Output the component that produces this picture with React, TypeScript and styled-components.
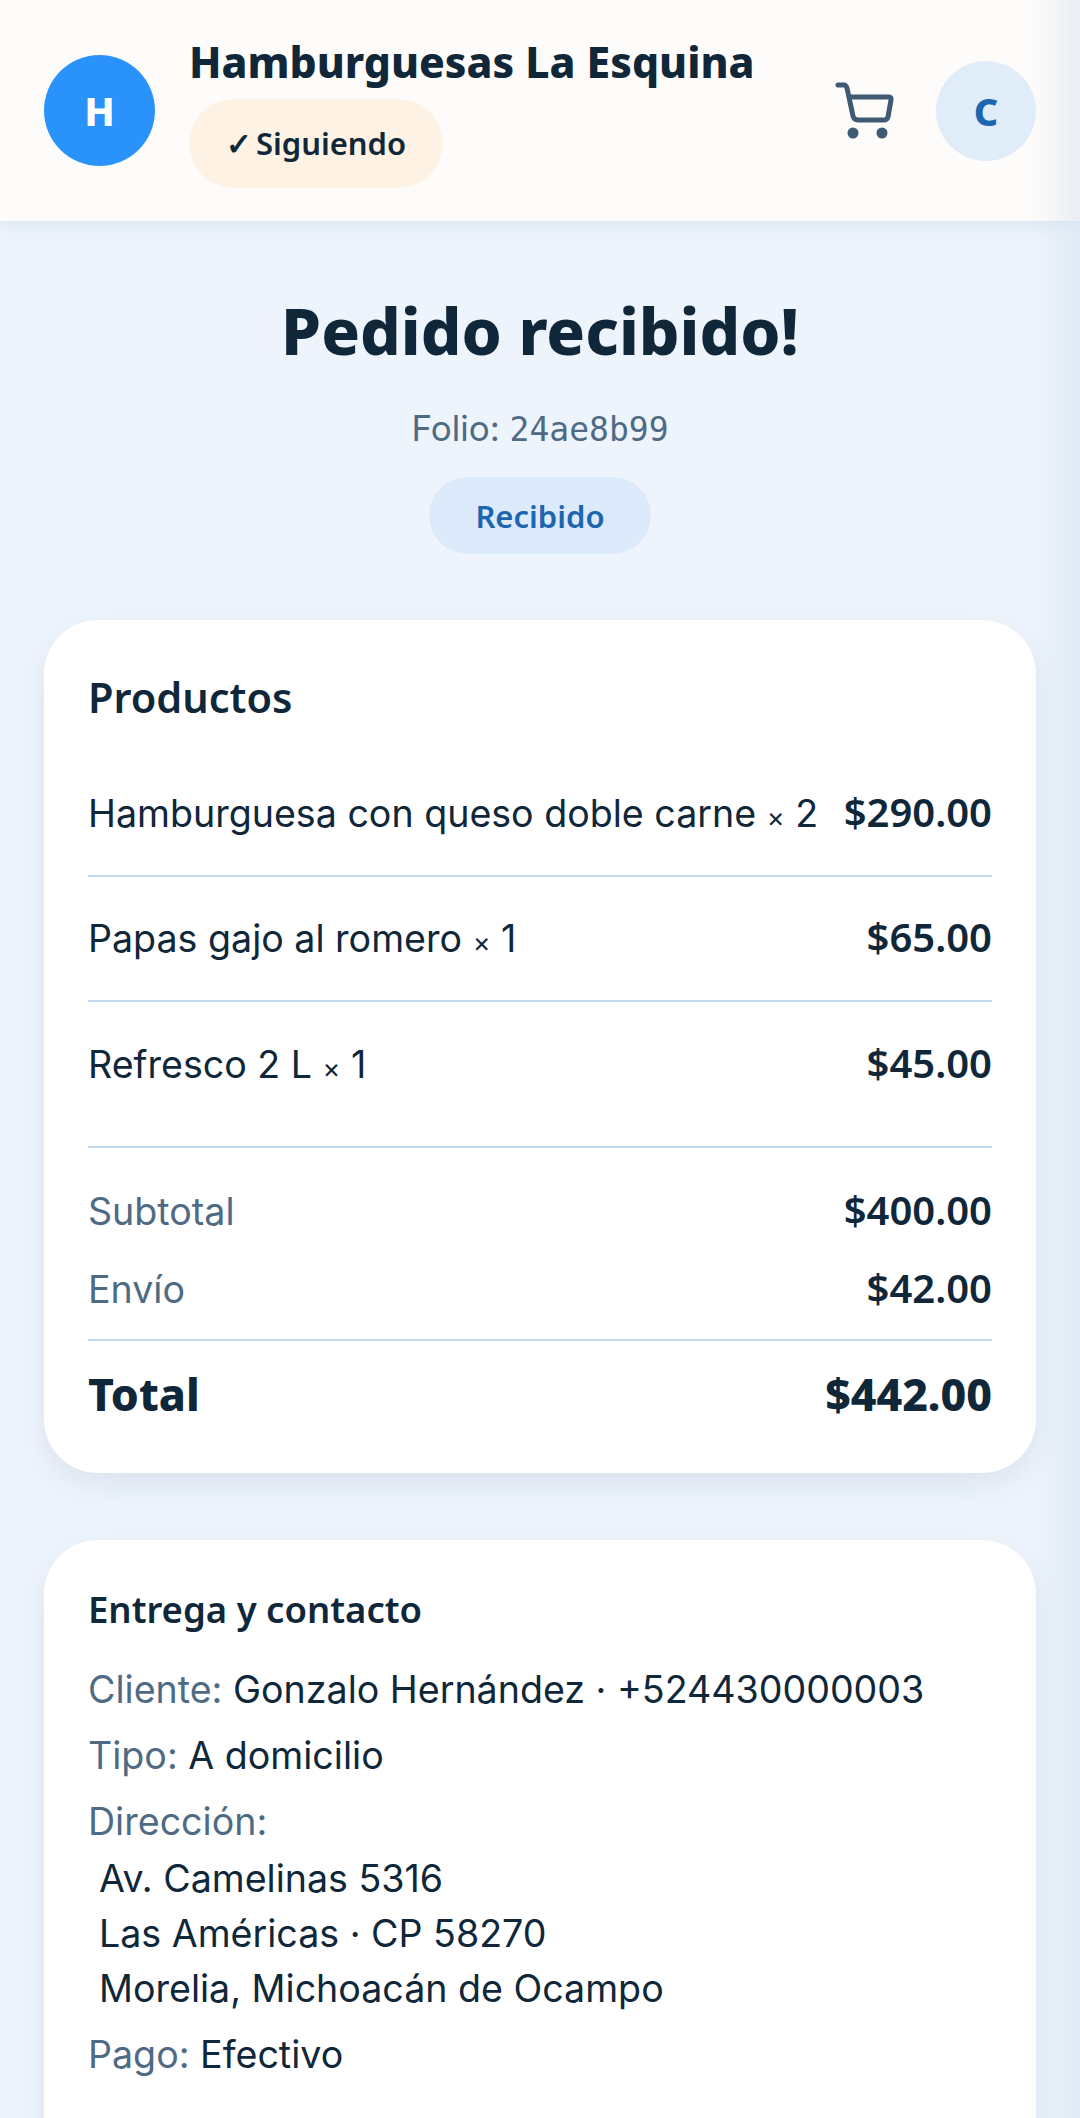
import React from "react";
import styled, { createGlobalStyle } from "styled-components";

const GlobalStyle = createGlobalStyle`
  html, body {
    margin: 0;
    padding: 0;
    background: #edf4fc;
  }
  * {
    box-sizing: border-box;
  }
`;

const products = [
  { name: "Hamburguesa con queso doble carne", qty: 2, price: "$290.00" },
  { name: "Papas gajo al romero", qty: 1, price: "$65.00" },
  { name: "Refresco 2 L", qty: 1, price: "$45.00" },
];

const CartIcon = () => (
  <svg width="62" height="62" viewBox="0 0 62 62" fill="none" stroke="#3f5a73" strokeWidth="5" strokeLinecap="round" strokeLinejoin="round">
    <path d="M4 5H10Q12 5 13 8L19 36Q20 40 24 40H50Q53 40 54 37L57 20Q57.5 17 55 17H15" />
    <circle cx="19" cy="53" r="5.5" fill="#3f5a73" stroke="none" />
    <circle cx="48" cy="53" r="5.5" fill="#3f5a73" stroke="none" />
  </svg>
);

const App: React.FC = () => {
  return (
    <Page>
      <GlobalStyle />
      <Header>
        <Avatar>H</Avatar>
        <Brand>
          <BrandName>Hamburguesas La Esquina</BrandName>
          <FollowPill>✓ Siguiendo</FollowPill>
        </Brand>
        <HeaderActions>
          <CartIcon />
          <UserBubble>C</UserBubble>
        </HeaderActions>
      </Header>
      <Main>
        <Hero>
          <Title>Pedido recibido!</Title>
          <Folio>
            Folio: <code>24ae8b99</code>
          </Folio>
          <StatusPill>Recibido</StatusPill>
        </Hero>
        <Card>
          <CardTitle>Productos</CardTitle>
          {products.map((item, i) => (
            <ProductRow key={item.name} $last={i === products.length - 1}>
              <span>
                {item.name} <Times>×</Times> {item.qty}
              </span>
              <Price>{item.price}</Price>
            </ProductRow>
          ))}
          <Totals>
            <TotalRow>
              <span>Subtotal</span>
              <Price>$400.00</Price>
            </TotalRow>
            <TotalRow>
              <span>Envío</span>
              <Price>$42.00</Price>
            </TotalRow>
          </Totals>
          <GrandTotal>
            <span>Total</span>
            <span>$442.00</span>
          </GrandTotal>
        </Card>
        <ContactCard>
          <ContactTitle>Entrega y contacto</ContactTitle>
          <InfoLine>
            <b>Cliente:</b> Gonzalo Hernández · +524430000003
          </InfoLine>
          <InfoLine>
            <b>Tipo:</b> A domicilio
          </InfoLine>
          <InfoLine>
            <b>Dirección:</b>
            <Address>
              Av. Camelinas 5316
              <br />
              Las Américas · CP 58270
              <br />
              Morelia, Michoacán de Ocampo
            </Address>
          </InfoLine>
          <InfoLine>
            <b>Pago:</b> Efectivo
          </InfoLine>
        </ContactCard>
      </Main>
      <EdgeFade />
    </Page>
  );
};

const Page = styled.div`
  position: relative;
  width: 1080px;
  height: 2118px;
  overflow: hidden;
  background: #edf4fc;
  color: #10273a;
  font-family: Inter, "Noto Sans", sans-serif;
`;

const EdgeFade = styled.div`
  position: absolute;
  top: 0;
  right: 0;
  bottom: 0;
  width: 50px;
  pointer-events: none;
  background: linear-gradient(to right, rgba(215, 227, 240, 0), rgba(215, 227, 240, 0.55));
`;

const Header = styled.header`
  height: 221px;
  padding: 0 44px;
  display: flex;
  align-items: center;
  background: #fefcfa;
  box-shadow: 0 2px 18px rgba(60, 90, 130, 0.12);
`;

const Avatar = styled.div`
  width: 111px;
  height: 111px;
  border-radius: 50%;
  background: #2992fb;
  color: #fff;
  font-family: "Noto Sans", sans-serif;
  font-weight: 800;
  font-size: 40px;
  display: flex;
  align-items: center;
  justify-content: center;
  flex-shrink: 0;
`;

const Brand = styled.div`
  margin-left: 34px;
  display: flex;
  flex-direction: column;
  align-items: flex-start;
  gap: 11px;
`;

const BrandName = styled.div`
  font-family: "Noto Sans", sans-serif;
  font-weight: 800;
  font-size: 42.6px;
  line-height: 54px;
  white-space: nowrap;
`;

const FollowPill = styled.div`
  width: 254px;
  height: 89px;
  border-radius: 45px;
  background: #fdf2e4;
  font-family: "Noto Sans", sans-serif;
  font-weight: 600;
  font-size: 31px;
  word-spacing: -4px;
  display: flex;
  align-items: center;
  justify-content: center;
`;

const HeaderActions = styled.div`
  margin-left: auto;
  display: flex;
  align-items: center;
  gap: 40px;
`;

const UserBubble = styled.div`
  width: 100px;
  height: 100px;
  border-radius: 50%;
  background: #e0ecf8;
  color: #1c66b0;
  font-family: "Noto Sans", sans-serif;
  font-weight: 800;
  font-size: 38px;
  display: flex;
  align-items: center;
  justify-content: center;
`;

const Main = styled.main`
  padding: 0 44px;
`;

const Hero = styled.section`
  padding-top: 70px;
  display: flex;
  flex-direction: column;
  align-items: center;
`;

const Title = styled.h1`
  margin: 0;
  font-family: "Noto Sans", sans-serif;
  font-weight: 800;
  font-size: 64px;
  line-height: 80px;
`;

const Folio = styled.div`
  margin-top: 34px;
  font-size: 35px;
  line-height: 46px;
  color: #4f6b84;
  code {
    font-family: "DejaVu Sans Mono", monospace;
    font-size: 33px;
  }
`;

const StatusPill = styled.div`
  margin-top: 24px;
  width: 222px;
  height: 77px;
  border-radius: 39px;
  background: #dceafb;
  color: #1c66b0;
  font-family: "Noto Sans", sans-serif;
  font-weight: 600;
  font-size: 31px;
  display: flex;
  align-items: center;
  justify-content: center;
`;

const Card = styled.section`
  margin-top: 66px;
  padding: 49px 44px;
  border-radius: 54px;
  background: #fff;
  box-shadow: 0 12px 30px rgba(60, 90, 130, 0.1);
`;

const CardTitle = styled.h2`
  margin: 0 0 27px;
  font-family: "Noto Sans", sans-serif;
  font-weight: 600;
  font-size: 41.5px;
  line-height: 56px;
`;

const ProductRow = styled.div<{ $last?: boolean }>`
  height: 125px;
  display: flex;
  justify-content: space-between;
  align-items: center;
  gap: 16px;
  font-size: 37.6px;
  border-bottom: ${(p) => (p.$last ? "none" : "2px solid #c5d9ec")};
  white-space: nowrap;
`;

const Times = styled.span`
  font-size: 27px;
`;

const Price = styled.span`
  font-family: "Noto Sans", sans-serif;
  font-weight: 600;
  font-size: 40px;
  margin-top: -4px;
`;

const Totals = styled.div`
  margin-top: 19px;
  padding: 24px 0 11px;
  border-top: 2px solid #c5d9ec;
  border-bottom: 2px solid #c5d9ec;
`;

const TotalRow = styled.div`
  height: 78px;
  display: flex;
  justify-content: space-between;
  align-items: center;
  font-size: 37.6px;
  color: #4f6b84;
  ${Price} {
    color: #10273a;
  }
`;

const GrandTotal = styled.div`
  margin-top: 23px;
  display: flex;
  justify-content: space-between;
  font-family: "Noto Sans", sans-serif;
  font-weight: 800;
  font-size: 44.5px;
  line-height: 60px;
`;

const ContactCard = styled.section`
  margin-top: 67px;
  height: 640px;
  padding: 44px 44px 0;
  border-radius: 54px;
  background: #fff;
  box-shadow: 0 12px 30px rgba(60, 90, 130, 0.1);
`;

const ContactTitle = styled.h3`
  margin: 0 0 28px;
  font-family: "Noto Sans", sans-serif;
  font-weight: 600;
  font-size: 36.5px;
  line-height: 50px;
`;

const InfoLine = styled.div`
  font-size: 37.6px;
  line-height: 55px;
  margin-bottom: 11px;
  b {
    font-weight: 400;
    color: #4f6b84;
  }
`;

const Address = styled.div`
  margin: 2px 0 3px;
  padding-left: 11px;
`;

export default App;
